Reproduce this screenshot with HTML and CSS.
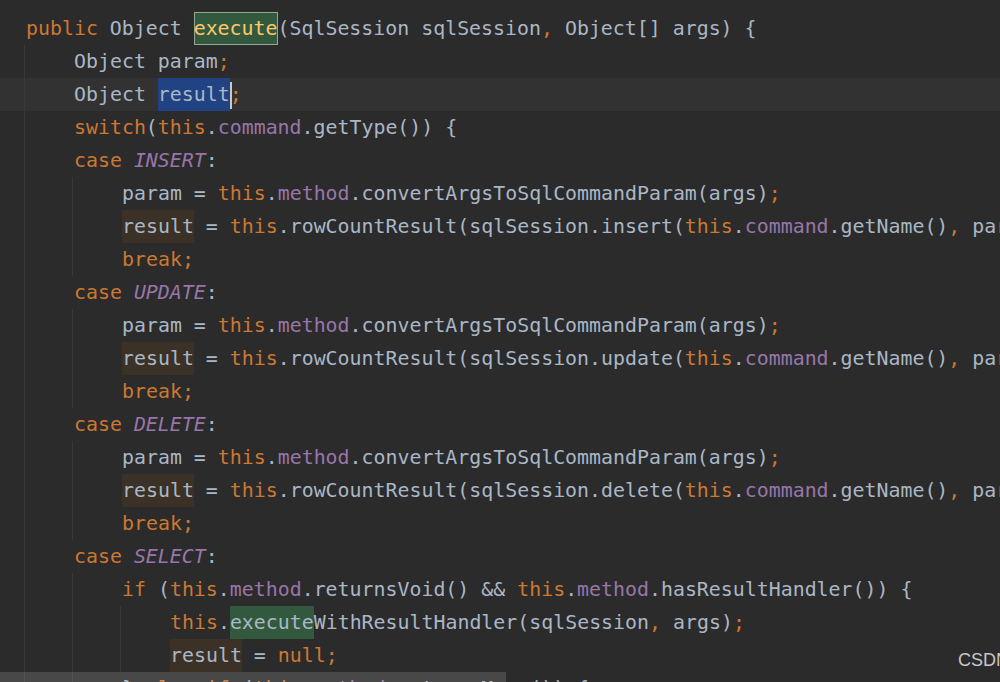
FILE: index.html
```html
<!DOCTYPE html>
<html>
<head>
<meta charset="utf-8">
<link rel="stylesheet" href="styles.css">
</head>
<body>
<div class="editor">
  <div class="line"><span class="t"><span class="kw">public</span> Object <span class="hl-cur"><span class="md">execute</span></span>(SqlSession sqlSession<span class="kw">,</span> Object[] args) {</span></div>
  <div class="line"><span class="ind g"></span><span class="t">Object param<span class="kw">;</span></span></div>
  <div class="line cur"><span class="ind g"></span><span class="t">Object <span class="sel">result</span><span class="caret"></span><span class="kw">;</span></span></div>
  <div class="line"><span class="ind g"></span><span class="t"><span class="kw">switch</span>(<span class="kw">this</span>.<span class="fd">command</span>.getType()) {</span></div>
  <div class="line"><span class="ind g"></span><span class="t"><span class="kw">case</span> <span class="cn">INSERT</span>:</span></div>
  <div class="line"><span class="ind g"></span><span class="ind g"></span><span class="t">param = <span class="kw">this</span>.<span class="fd">method</span>.convertArgsToSqlCommandParam(args)<span class="kw">;</span></span></div>
  <div class="line"><span class="ind g"></span><span class="ind g"></span><span class="t"><span class="wr">result</span> = <span class="kw">this</span>.rowCountResult(sqlSession.insert(<span class="kw">this</span>.<span class="fd">command</span>.getName()<span class="kw">,</span> param))<span class="kw">;</span></span></div>
  <div class="line"><span class="ind g"></span><span class="ind g"></span><span class="t"><span class="kw">break;</span></span></div>
  <div class="line"><span class="ind g"></span><span class="t"><span class="kw">case</span> <span class="cn">UPDATE</span>:</span></div>
  <div class="line"><span class="ind g"></span><span class="ind g"></span><span class="t">param = <span class="kw">this</span>.<span class="fd">method</span>.convertArgsToSqlCommandParam(args)<span class="kw">;</span></span></div>
  <div class="line"><span class="ind g"></span><span class="ind g"></span><span class="t"><span class="wr">result</span> = <span class="kw">this</span>.rowCountResult(sqlSession.update(<span class="kw">this</span>.<span class="fd">command</span>.getName()<span class="kw">,</span> param))<span class="kw">;</span></span></div>
  <div class="line"><span class="ind g"></span><span class="ind g"></span><span class="t"><span class="kw">break;</span></span></div>
  <div class="line"><span class="ind g"></span><span class="t"><span class="kw">case</span> <span class="cn">DELETE</span>:</span></div>
  <div class="line"><span class="ind g"></span><span class="ind g"></span><span class="t">param = <span class="kw">this</span>.<span class="fd">method</span>.convertArgsToSqlCommandParam(args)<span class="kw">;</span></span></div>
  <div class="line"><span class="ind g"></span><span class="ind g"></span><span class="t"><span class="wr">result</span> = <span class="kw">this</span>.rowCountResult(sqlSession.delete(<span class="kw">this</span>.<span class="fd">command</span>.getName()<span class="kw">,</span> param))<span class="kw">;</span></span></div>
  <div class="line"><span class="ind g"></span><span class="ind g"></span><span class="t"><span class="kw">break;</span></span></div>
  <div class="line"><span class="ind g"></span><span class="t"><span class="kw">case</span> <span class="cn">SELECT</span>:</span></div>
  <div class="line"><span class="ind g"></span><span class="ind g"></span><span class="t"><span class="kw">if</span> (<span class="kw">this</span>.<span class="fd">method</span>.returnsVoid() &amp;&amp; <span class="kw">this</span>.<span class="fd">method</span>.hasResultHandler()) {</span></div>
  <div class="line"><span class="ind g"></span><span class="ind g"></span><span class="ind g"></span><span class="t"><span class="kw">this</span>.<span class="found">execute</span>WithResultHandler(sqlSession<span class="kw">,</span> args)<span class="kw">;</span></span></div>
  <div class="line"><span class="ind g"></span><span class="ind g"></span><span class="ind g"></span><span class="t"><span class="wr">result</span> = <span class="kw">null;</span></span></div>
  <div class="line"><span class="ind g"></span><span class="ind g"></span><span class="t">} <span class="kw">else if</span> (<span class="kw">this</span>.<span class="fd">method</span>.returnsMany()) {</span></div>
</div>
<div class="hscroll"></div>
<div class="mark">CSDN @程序员</div>
</body>
</html>
```
FILE: styles.css
```css
html, body {
  margin: 0;
  padding: 0;
}
body {
  width: 1000px;
  height: 682px;
  overflow: hidden;
  background: #2b2b2b;
  position: relative;
}
.editor {
  padding-top: 12px;
  font-family: "DejaVu Sans Mono", "Liberation Mono", monospace;
  font-size: 19.9px;
  color: #a9b7c6;
}
.line {
  display: flex;
  height: 33px;
  line-height: 34px;
  padding-left: 24px;
  white-space: pre;
  overflow: hidden;
}
.line.cur {
  background: #323232;
}
.ind {
  flex: none;
  width: 48px;
  height: 33px;
  box-sizing: border-box;
}
.ind.g {
  border-left: 1px solid #393939;
}
.t {
  flex: none;
  padding-left: 2px;
}
.kw { color: #cc7832; }
.fd { color: #9876aa; }
.cn { color: #9876aa; font-style: italic; }
.md { color: #ffc66d; }
.hl-cur {
  display: inline-block;
  height: 33px;
  line-height: 34px;
  background: #32593d;
  box-shadow: inset 0 0 0 1px #93a893;
}
.sel {
  display: inline-block;
  height: 33px;
  line-height: 34px;
  background: #214283;
}
.caret {
  display: inline-block;
  width: 2px;
  height: 27px;
  margin-right: -2px;
  vertical-align: middle;
  background: #c8c8c8;
}
.wr {
  display: inline-block;
  height: 33px;
  line-height: 34px;
  background: #3c3127;
}
.found {
  display: inline-block;
  height: 33px;
  line-height: 34px;
  background: #32593d;
}
.hscroll {
  position: absolute;
  left: 0;
  bottom: 0;
  width: 506px;
  height: 10px;
  background: rgba(255, 255, 255, 0.14);
}
.mark {
  position: absolute;
  left: 958px;
  top: 649px;
  font-family: "Liberation Sans", Arial, sans-serif;
  font-size: 18px;
  line-height: 22px;
  color: #c6c6c6;
  white-space: nowrap;
}
```
